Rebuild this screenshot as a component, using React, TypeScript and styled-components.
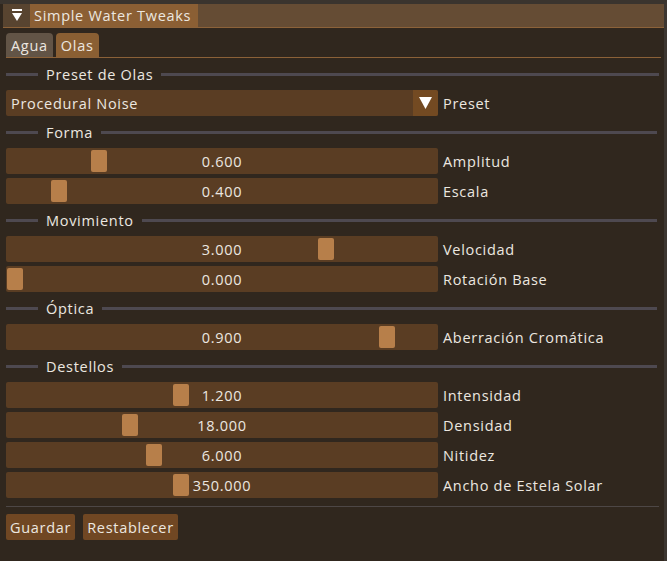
import styled, { createGlobalStyle } from "styled-components";

type SliderRow = {
  label: string
  value: string
  pos: number
}

type Section = {
  title: string
  rows: SliderRow[]
}

const GlobalStyle = createGlobalStyle`
  html, body {
    margin: 0;
    padding: 0;
    background: #30271e;
  }
  body {
    font-family: "Open Sans", "Noto Sans", sans-serif;
    font-size: 14.5px;
    letter-spacing: 0.7px;
    color: #ece7e0;
  }
`

const Window = styled.div`
  box-sizing: border-box;
  width: 667px;
  height: 561px;
  background: #30271e;
  border-top: 4px solid #3a342e;
  border-right: 3px solid #3c3631;
  display: flex;
  flex-direction: column;
`

const TitleBar = styled.div`
  display: flex;
  align-items: stretch;
  height: 23px;
  margin-left: 3px;
  background: #654c34;
  border-bottom: 1px solid #8c6239;
`

const CollapseButton = styled.div`
  width: 27px;
  display: flex;
  align-items: center;
  justify-content: center;
  background: #584430;
`

const TitleText = styled.div`
  display: flex;
  align-items: center;
  padding: 0 7px 0 4px;
  background: #8b5f34;
  white-space: nowrap;
`

const Body = styled.div`
  display: flex;
  flex-direction: column;
  gap: 4px;
  padding: 5px 3px 0 6px;
`

const TabBar = styled.div`
  display: flex;
  gap: 3px;
  border-bottom: 1px solid #8b6138;
`

const Tab = styled.div<{ $active?: boolean }>`
  height: 24px;
  display: flex;
  align-items: center;
  padding: 0 5px;
  border-radius: 4px 4px 0 0;
  background: ${(p) => (p.$active ? "#8a5f33" : "#625446")};
`

const Content = styled.div`
  display: flex;
  flex-direction: column;
  gap: 4px;
  padding-right: 2px;
`

const SepRow = styled.div`
  height: 24px;
  display: flex;
  align-items: center;
  gap: 8px;
`

const SepLine = styled.div<{ $grow?: boolean }>`
  height: 3px;
  background: #4e4950;
  width: 32px;
  flex: ${(p) => (p.$grow ? "1" : "none")};
`

const Row = styled.div`
  display: flex;
  align-items: center;
  gap: 5px;
`

const Frame = styled.div`
  position: relative;
  box-sizing: border-box;
  width: 432px;
  height: 26px;
  border-radius: 2px;
  background: #5a3d23;
  display: flex;
  align-items: center;
`

const SliderValue = styled.span`
  position: relative;
  z-index: 1;
  flex: 1;
  text-align: center;
`

const Grab = styled.div`
  position: absolute;
  top: 2px;
  width: 16px;
  height: 22px;
  border-radius: 2px;
  background: #b77f4a;
`

const ComboText = styled.span`
  flex: 1;
  padding-left: 5px;
`

const ComboArrow = styled.div`
  width: 25px;
  height: 100%;
  display: flex;
  align-items: center;
  justify-content: center;
  background: #734a22;
  border-radius: 0 2px 2px 0;
`

const Label = styled.span`
  white-space: nowrap;
`

const Divider = styled.div`
  height: 1px;
  background: #4d4746;
  margin: 4px 0 3px;
`

const Buttons = styled.div`
  display: flex;
  gap: 8px;
`

const Button = styled.div`
  height: 26px;
  display: flex;
  align-items: center;
  padding: 0 4px;
  border-radius: 2px;
  background: #704723;
`

const sections: Section[] = [
  {
    title: "Forma",
    rows: [
      { label: "Amplitud", value: "0.600", pos: 85 },
      { label: "Escala", value: "0.400", pos: 45 },
    ],
  },
  {
    title: "Movimiento",
    rows: [
      { label: "Velocidad", value: "3.000", pos: 312 },
      { label: "Rotación Base", value: "0.000", pos: 1 },
    ],
  },
  {
    title: "Óptica",
    rows: [{ label: "Aberración Cromática", value: "0.900", pos: 373 }],
  },
  {
    title: "Destellos",
    rows: [
      { label: "Intensidad", value: "1.200", pos: 167 },
      { label: "Densidad", value: "18.000", pos: 116 },
      { label: "Nitidez", value: "6.000", pos: 140 },
      { label: "Ancho de Estela Solar", value: "350.000", pos: 167 },
    ],
  },
]

const Separator = ({ title }: { title: string }) => (
  <SepRow>
    <SepLine />
    <span>{title}</span>
    <SepLine $grow />
  </SepRow>
)

export default function App() {
  return (
    <>
      <GlobalStyle />
      <Window>
        <TitleBar>
          <CollapseButton>
            <svg width="12" height="13" viewBox="0 0 12 13">
              <rect x="1" y="0" width="10" height="2" fill="#fff" />
              <polygon points="1,4 11,4 6,12" fill="#fff" />
            </svg>
          </CollapseButton>
          <TitleText>Simple Water Tweaks</TitleText>
        </TitleBar>
        <Body>
          <TabBar>
            <Tab>Agua</Tab>
            <Tab $active>Olas</Tab>
          </TabBar>
          <Content>
            <Separator title="Preset de Olas" />
            <Row>
              <Frame>
                <ComboText>Procedural Noise</ComboText>
                <ComboArrow>
                  <svg width="13" height="12" viewBox="0 0 13 12">
                    <polygon points="0,0 13,0 6.5,12" fill="#fff" />
                  </svg>
                </ComboArrow>
              </Frame>
              <Label>Preset</Label>
            </Row>
            {sections.map((s) => (
              <Content key={s.title}>
                <Separator title={s.title} />
                {s.rows.map((r) => (
                  <Row key={r.label}>
                    <Frame>
                      <Grab style={{ left: r.pos }} />
                      <SliderValue>{r.value}</SliderValue>
                    </Frame>
                    <Label>{r.label}</Label>
                  </Row>
                ))}
              </Content>
            ))}
            <Divider />
            <Buttons>
              <Button>Guardar</Button>
              <Button>Restablecer</Button>
            </Buttons>
          </Content>
        </Body>
      </Window>
    </>
  )
}
